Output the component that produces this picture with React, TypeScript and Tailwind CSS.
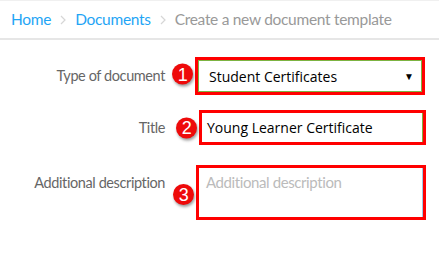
import React from "react";

function Marker({ n, className }: { n: number; className: string }) {
  return (
    <span
      className={`absolute left-[-23px] grid place-items-center h-[21px] w-[21px] rounded-full bg-[#ee0a0a] text-white text-[18px] leading-none font-['Liberation_Sans',sans-serif] shadow-[1px_2px_3px_rgba(0,0,0,0.4)] ${className}`}
    >
      {n}
    </span>
  );
}

function Chevron() {
  return (
    <svg width="6" height="10" viewBox="0 0 6 10" className="text-[#d6d6d6]">
      <path d="M1 1 L5 5 L1 9" fill="none" stroke="currentColor" strokeWidth="1.2" />
    </svg>
  );
}

export default function App() {
  return (
    <div className="w-[439px] h-[254px] bg-white border-t border-[#f0f0f0] font-['Lato',sans-serif] overflow-hidden">
      <nav className="h-[39px] flex items-center gap-[9px] pl-[11px] border-b-2 border-[#e6e6e6] text-[15.5px] tracking-[-0.3px]">
        <span className="text-[#1fa5f5]">Home</span>
        <Chevron />
        <span className="text-[#1fa5f5]">Documents</span>
        <Chevron />
        <span className="text-[#999999]">Create a new document template</span>
      </nav>

      <div className="flex flex-col text-[14.5px] tracking-[-0.4px] text-[#666666]">
        <div className="flex items-center mt-[17px]">
          <label className="w-[165px] text-right">Type of document</label>
          <div className="relative ml-[30px]">
            <Marker n={1} className="top-1/2 -translate-y-1/2 mt-[-2px]" />
            <div className="w-[230px] h-[38px] border-[3px] border-[#ff0000] tracking-normal">
              <div className="h-full border border-[#7cb342] flex items-center justify-between pl-[10px] pr-[7px] font-['Open_Sans',sans-serif] text-[14px] text-black">
                <span>Student Certificates</span>
                <span className="text-[10px]">▼</span>
              </div>
            </div>
          </div>
        </div>

        <div className="flex items-center mt-[15px]">
          <label className="w-[165px] text-right">Title</label>
          <div className="relative ml-[34px]">
            <Marker n={2} className="top-1/2 -translate-y-1/2" />
            <div className="w-[227px] h-[35px] border-[3px] border-[#ff0000] tracking-normal">
              <div className="h-full border-r border-[#7cb342] flex items-center pl-[5px] font-['Open_Sans',sans-serif] text-[14px] text-black">
                Young Learner Certificate
              </div>
            </div>
          </div>
        </div>

        <div className="flex items-start mt-[20px]">
          <label className="w-[165px] text-right mt-[7px]">Additional description</label>
          <div className="relative ml-[31px]">
            <Marker n={3} className="top-[19px]" />
            <div className="w-[230px] h-[55px] border-[3px] border-[#ff0000]">
              <div className="h-full border-r border-[#9ecbe8] pl-[7px] pt-[3px] text-[15px] text-[#bbbbbb]">
                Additional description
              </div>
            </div>
          </div>
        </div>
      </div>
    </div>
  );
}
